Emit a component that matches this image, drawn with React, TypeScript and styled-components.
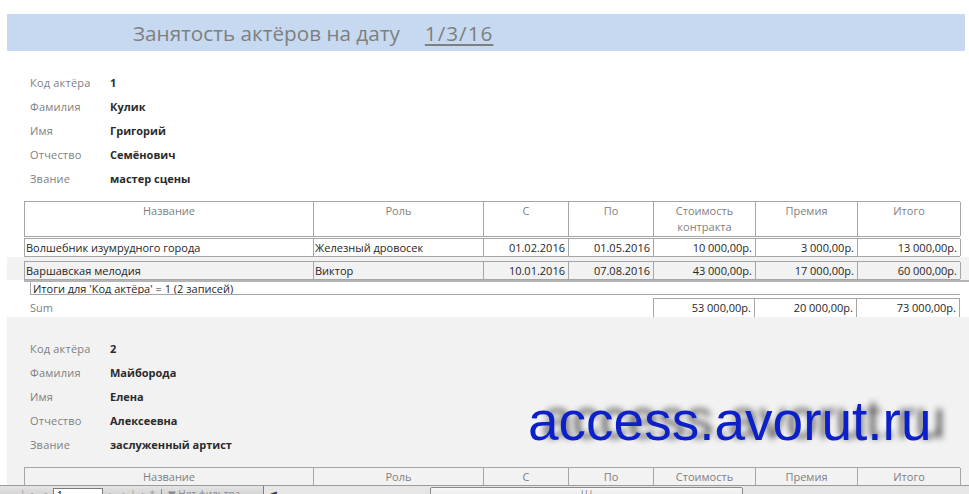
import React from "react";
import styled, { createGlobalStyle } from "styled-components";

const GRID = "289px 170px 85px 85px 102px 102px 103px";
const LINE = "#a6a6a6";
const SHADE = "#f2f2f2";

const GlobalStyle = createGlobalStyle`
  html, body { margin: 0; padding: 0; background: #ffffff; }
  body { font-family: "Open Sans", "Noto Sans", "DejaVu Sans", sans-serif; }
  * { box-sizing: border-box; }
`;

const Page = styled.div`
  position: relative;
  width: 969px;
  height: 494px;
  overflow: hidden;
  display: flex;
  flex-direction: column;
  background: #ffffff;
`;

const Report = styled.div`
  height: 485px;
  flex: none;
  overflow: hidden;
  display: flex;
  flex-direction: column;
`;

const TitleBand = styled.div`
  margin: 14px 4px 0 7px;
  height: 37px;
  flex: none;
  background: #c6d9f0;
  display: flex;
  align-items: center;
  gap: 25px;
  padding-left: 126px;
  font-size: 20.7px;
  color: #7f7f7f;
`;

const DateText = styled.span`
  text-decoration: underline;
  text-underline-offset: 3px;
  letter-spacing: 1px;
`;

const Group = styled.section<{ $shaded?: boolean }>`
  margin-left: 7px;
  padding-top: 19px;
  background: ${(p) => (p.$shaded ? SHADE : "transparent")};
  display: flex;
  flex-direction: column;
  flex: none;
`;

const Fields = styled.div`
  margin-left: 23px;
  display: grid;
  grid-template-columns: 80px auto;
  grid-auto-rows: 24px;
  align-items: center;
  font-size: 11px;
`;

const FieldLabel = styled.div`
  color: #7f7f7f;
  letter-spacing: 0.2px;
`;

const FieldValue = styled.div`
  color: #2b2b2b;
  font-weight: 700;
`;

const HeaderRow = styled.div`
  margin: 11px 0 0 17px;
  width: 936px;
  height: 36px;
  display: grid;
  grid-template-columns: ${GRID};
  border-top: 1px solid ${LINE};
  border-left: 1px solid ${LINE};
  border-bottom: 1px solid ${LINE};
`;

const HeaderCell = styled.div`
  border-right: 1px solid ${LINE};
  padding: 1px 4px 0;
  text-align: center;
  font-size: 11px;
  line-height: 16px;
  color: #7f7f7f;
`;

const DetailStrip = styled.div<{ $shaded?: boolean }>`
  margin-left: 7px;
  padding: ${(p) => (p.$shaded ? "4px" : "1px")} 0 0 17px;
  background: ${(p) => (p.$shaded ? SHADE : "transparent")};
`;

const DetailRow = styled.div`
  width: 936px;
  height: 19px;
  display: grid;
  grid-template-columns: ${GRID};
  border-top: 1px solid ${LINE};
  border-bottom: 1px solid ${LINE};
  border-left: 1px solid ${LINE};
`;

const DataCell = styled.div<{ $num?: boolean }>`
  border-right: 1px solid ${LINE};
  padding: 0 ${(p) => (p.$num ? "3px" : "1px")};
  text-align: ${(p) => (p.$num ? "right" : "left")};
  font-size: 11px;
  line-height: 17px;
  color: #262626;
  white-space: nowrap;
  overflow: hidden;
`;

const Footer = styled.div`
  margin-left: 24px;
  border-top: 2px solid #b4b4b4;
  display: flex;
  flex-direction: column;
`;

const CountBox = styled.div`
  margin-left: 6px;
  width: 930px;
  height: 13px;
  border-left: 1px solid ${LINE};
  border-bottom: 1px solid ${LINE};
  padding-left: 2px;
  font-size: 11px;
  line-height: 14px;
  color: #262626;
  overflow: hidden;
  white-space: nowrap;
`;

const SumRow = styled.div`
  margin-top: 3px;
  width: 936px;
  height: 19px;
  display: grid;
  grid-template-columns: 629px 102px 102px 103px;
`;

const SumLabel = styled.div`
  padding: 1px 0 0 6px;
  font-size: 11px;
  line-height: 17px;
  color: #7f7f7f;
`;

const SumCell = styled.div<{ $first?: boolean }>`
  border-top: 1px solid ${LINE};
  border-right: 1px solid ${LINE};
  border-left: ${(p) => (p.$first ? `1px solid ${LINE}` : "none")};
  padding: 0 3px;
  text-align: right;
  font-size: 11px;
  line-height: 17px;
  color: #262626;
`;

const NavBar = styled.div`
  flex: 1;
  border-top: 1px solid #9c9c9c;
  background: linear-gradient(#e4e4e4, #d6d6d6);
  display: flex;
  align-items: flex-start;
  overflow: hidden;
`;

const NavButtons = styled.div`
  width: 263px;
  flex: none;
  display: flex;
  align-items: flex-start;
  padding: 2px 0 0 20px;
  gap: 6px;
  font-size: 10px;
  line-height: 12px;
  color: #a0a0a0;
`;

const RecordBox = styled.div`
  width: 50px;
  height: 16px;
  background: #ffffff;
  border: 1px solid #7a7a7a;
  font-size: 10px;
  line-height: 12px;
  padding-left: 3px;
  color: #000;
`;

const NavDivider = styled.div`
  width: 1px;
  height: 14px;
  margin-top: 1px;
  background: #8c8c8c;
`;

const FilterText = styled.span`
  color: #8a8a8a;
`;

const ScrollTrack = styled.div`
  flex: 1;
  display: flex;
  align-items: flex-start;
  padding-top: 1px;
  border-left: 1px solid #7d7d7d;
  background: #e6e6e6;
  height: 20px;
`;

const ScrollArrow = styled.div`
  width: 16px;
  padding-left: 6px;
  font-size: 9px;
  line-height: 12px;
  color: #404040;
`;

const ScrollThumb = styled.div`
  margin-left: 150px;
  width: 313px;
  height: 16px;
  border: 1px solid #8a8a8a;
  border-radius: 2px;
  background: linear-gradient(#f7f7f7, #e2e2e2);
  text-align: center;
  font-size: 8px;
  line-height: 8px;
  color: #555;
`;

const Watermark = styled.div`
  position: absolute;
  left: 528px;
  top: 394px;
  font-family: "Liberation Sans", Arial, sans-serif;
  font-size: 55px;
  line-height: 55px;
  color: #0b20c8;
  text-shadow: 14px -2px 6px rgba(40, 40, 40, 0.75);
  white-space: nowrap;
  pointer-events: none;
`;

type Booking = {
  title: string;
  role: string;
  from: string;
  to: string;
  cost: string;
  bonus: string;
  total: string;
};

type Actor = {
  code: string;
  last: string;
  first: string;
  middle: string;
  rank: string;
  bookings: Booking[];
  sums?: [string, string, string];
};

const actors: Actor[] = [
  {
    code: "1",
    last: "Кулик",
    first: "Григорий",
    middle: "Семёнович",
    rank: "мастер сцены",
    bookings: [
      {
        title: "Волшебник изумрудного города",
        role: "Железный дровосек",
        from: "01.02.2016",
        to: "01.05.2016",
        cost: "10 000,00р.",
        bonus: "3 000,00р.",
        total: "13 000,00р.",
      },
      {
        title: "Варшавская мелодия",
        role: "Виктор",
        from: "10.01.2016",
        to: "07.08.2016",
        cost: "43 000,00р.",
        bonus: "17 000,00р.",
        total: "60 000,00р.",
      },
    ],
    sums: ["53 000,00р.", "20 000,00р.", "73 000,00р."],
  },
  {
    code: "2",
    last: "Майборода",
    first: "Елена",
    middle: "Алексеевна",
    rank: "заслуженный артист",
    bookings: [],
  },
];

const headers = ["Название", "Роль", "С", "По", "Стоимость контракта", "Премия", "Итого"];

function ActorGroup({ actor, shaded }: { actor: Actor; shaded?: boolean }) {
  const fields: [string, string][] = [
    ["Код актёра", actor.code],
    ["Фамилия", actor.last],
    ["Имя", actor.first],
    ["Отчество", actor.middle],
    ["Звание", actor.rank],
  ];
  return (
    <>
      <Group $shaded={shaded}>
        <Fields>
          {fields.map(([l, v]) => (
            <React.Fragment key={l}>
              <FieldLabel>{l}</FieldLabel>
              <FieldValue>{v}</FieldValue>
            </React.Fragment>
          ))}
        </Fields>
        <HeaderRow>
          {headers.map((h) => (
            <HeaderCell key={h}>{h}</HeaderCell>
          ))}
        </HeaderRow>
      </Group>
      {actor.bookings.map((b, i) => (
        <DetailStrip key={b.title} $shaded={i % 2 === 1}>
          <DetailRow>
            <DataCell>{b.title}</DataCell>
            <DataCell>{b.role}</DataCell>
            <DataCell $num>{b.from}</DataCell>
            <DataCell $num>{b.to}</DataCell>
            <DataCell $num>{b.cost}</DataCell>
            <DataCell $num>{b.bonus}</DataCell>
            <DataCell $num>{b.total}</DataCell>
          </DetailRow>
        </DetailStrip>
      ))}
      {actor.sums && (
        <Footer>
          <CountBox>
            Итоги для 'Код актёра' = {actor.code} ({actor.bookings.length} записей)
          </CountBox>
          <SumRow>
            <SumLabel>Sum</SumLabel>
            <SumCell $first>{actor.sums[0]}</SumCell>
            <SumCell>{actor.sums[1]}</SumCell>
            <SumCell>{actor.sums[2]}</SumCell>
          </SumRow>
        </Footer>
      )}
    </>
  );
}

export default function App() {
  return (
    <Page>
      <GlobalStyle />
      <Report>
        <TitleBand>
          <span>Занятость актёров на дату</span>
          <DateText>1/3/16</DateText>
        </TitleBand>
        {actors.map((a, i) => (
          <ActorGroup key={a.code} actor={a} shaded={i % 2 === 1} />
        ))}
      </Report>
      <NavBar>
        <NavButtons>
          <span>|◄</span>
          <span>◄</span>
          <RecordBox>1</RecordBox>
          <span>►</span>
          <span>►|</span>
          <span>►*</span>
          <NavDivider />
          <FilterText>▼ Нет фильтра</FilterText>
        </NavButtons>
        <ScrollTrack>
          <ScrollArrow>◄</ScrollArrow>
          <ScrollThumb>|||</ScrollThumb>
        </ScrollTrack>
      </NavBar>
      <Watermark>access.avorut.ru</Watermark>
    </Page>
  );
}
